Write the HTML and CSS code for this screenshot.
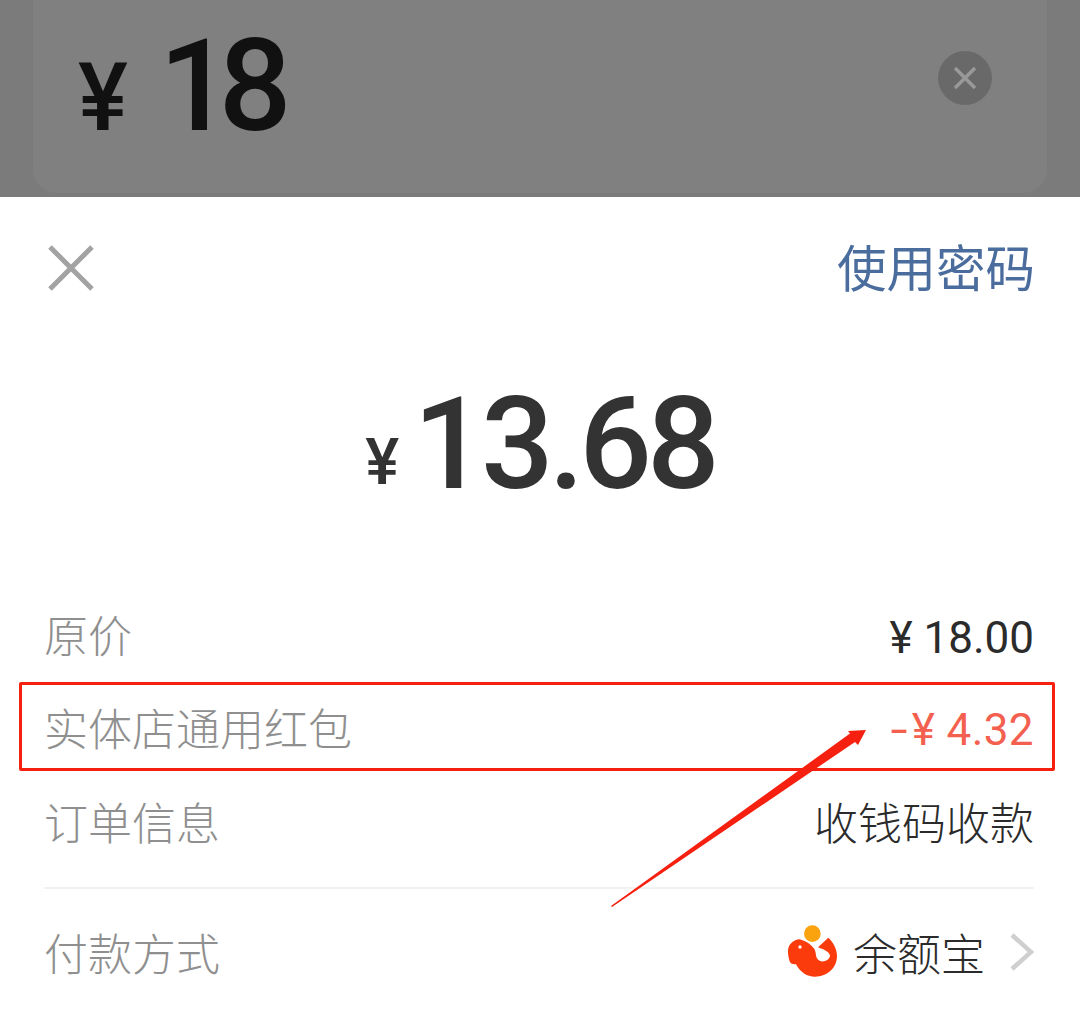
FILE: index.html
```html
<!DOCTYPE html>
<html lang="zh-CN">
<head>
  <meta charset="UTF-8">
  <title>付款详情</title>
  <link rel="stylesheet" href="styles.css">
</head>
<body>

<div class="screen">
  <div class="backdrop">
    <div class="amount-card">
      <div class="amount-input"><span class="amount-yen">¥</span><span class="amount-num">18</span></div>
      <span class="clear-btn">
        <svg width="54" height="54" viewBox="0 0 54 54"><circle cx="27" cy="27" r="27" fill="#696969"/><path d="M17 17L37 37M37 17L17 37" stroke="#999" stroke-width="3.5" fill="none"/></svg>
      </span>
    </div>
  </div>

  <div class="sheet">
    <div class="sheet-head">
      <svg class="close-icon" width="46" height="46" viewBox="0 0 46 46"><path d="M2 2L44 44M44 2L2 44" stroke="#a3a3a3" stroke-width="5" fill="none"/></svg>
      <a class="use-password">使用密码</a>
    </div>

    <div class="total"><span class="total-yen">¥</span><span class="total-num">13.68</span></div>

    <div class="rows">
      <div class="row row-price">
        <span class="row-label">原价</span>
        <span class="row-value num">¥ 18.00</span>
      </div>
      <div class="row row-coupon">
        <span class="row-label">实体店通用红包</span>
        <span class="row-value num discount"><span class="minus">-</span>¥ 4.32</span>
      </div>
      <div class="row row-order">
        <span class="row-label">订单信息</span>
        <span class="row-value">收钱码收款</span>
      </div>
      <div class="row row-method">
        <span class="row-label">付款方式</span>
        <span class="row-value method">
          <svg class="yeb-logo" width="52" height="54" viewBox="18 12 156 162">
            <circle cx="97" cy="38" r="25" fill="#fba30f"/>
            <path d="M55 55C35 60 22 75 24 95C25 108 27 115 30 124C34 130 42 130 48 130C62 155 80 167 105 167C142 167 171 140 171 105C171 82 158 62 145 50L114 79C128 84 150 92 150 106C146 120 125 128 113 115C105 105 110 90 100 80C88 66 72 57 55 55Z" fill="#fb3b0b"/>
            <circle cx="60" cy="78" r="5" fill="#fff"/>
          </svg>
          <span>余额宝</span>
          <svg class="chevron" width="24" height="38" viewBox="0 0 24 38"><path d="M2 2L21 19L2 36" stroke="#cfcfcf" stroke-width="4.5" fill="none"/></svg>
        </span>
      </div>
    </div>
  </div>

  <div class="mark-box"></div>
  <svg class="mark-arrow" width="1080" height="1029" viewBox="0 0 1080 1029"><polygon points="611,906 850,733.5 848,731 866,730 858,745 855,742 612,907" fill="#f5200f"/></svg>
</div>

</body>
</html>
```
FILE: styles.css
```css
html, body {
  margin: 0;
  padding: 0;
}
body {
  font-family: "Noto Sans CJK SC", "Noto Sans", sans-serif;
  background: white;
}
.screen {
  position: relative;
  width: 1080px;
  height: 1029px;
  overflow: hidden;
}
.backdrop {
  height: 197px;
  padding: 0 33px;
  box-sizing: border-box;
  background: #7b7b7b;
}
.amount-card {
  height: 193px;
  background: #808080;
  border-radius: 0 0 24px 24px;
  display: flex;
  align-items: center;
  justify-content: space-between;
  padding: 0 55px 38px 45px;
  box-sizing: border-box;
}
.amount-input {
  display: flex;
  align-items: baseline;
  color: #111;
  font-family: Roboto, sans-serif;
  font-weight: 500;
  margin-top: 16px;
}
.amount-yen {
  font-size: 94px;
  margin-right: 31px;
}
.amount-num {
  font-size: 128px;
  line-height: 150px;
  letter-spacing: -13px;
}
.clear-btn {
  display: flex;
}
.sheet {
  background: white;
}
.sheet-head {
  height: 142px;
  padding: 0 45px 0 48px;
  display: flex;
  align-items: center;
  justify-content: space-between;
}
.use-password {
  color: #4a6d9e;
  font-size: 49.5px;
  margin-bottom: 6px;
}
.total {
  height: 210px;
  margin-bottom: 39px;
  display: flex;
  align-items: center;
  justify-content: center;
  color: #333;
  font-family: Roboto, sans-serif;
  font-weight: 500;
}
.total-yen {
  font-size: 64px;
  align-self: flex-end;
  margin-bottom: 49px;
  margin-right: 14px;
}
.total-num {
  font-size: 128px;
  letter-spacing: -5px;
}
.rows {
  padding: 0 46px 0 44px;
}
.row {
  display: flex;
  align-items: center;
  justify-content: space-between;
  height: 92px;
}
.row-label {
  color: #8f8f8f;
  font-size: 44px;
  font-weight: 300;
}
.row-value {
  color: #2b2b2b;
  font-size: 44px;
  font-weight: 300;
}
.num {
  font-family: Roboto, sans-serif;
  font-weight: 400;
  padding-top: 7px;
}
.discount {
  color: #f4604f;
  letter-spacing: 0.4px;
}
.minus {
  display: inline-block;
  transform: scaleX(1.4);
  margin-right: 6px;
}
.row-coupon {
  height: 93px;
}
.row-order {
  padding-top: 2px;
  padding-bottom: 20px;
  border-bottom: 2px solid #f2f2f2;
}
.row-method {
  height: 126px;
}
.method {
  display: flex;
  align-items: center;
}
.yeb-logo {
  margin-right: 15px;
}
.chevron {
  margin-left: 25px;
}
.mark-box {
  position: absolute;
  left: 19px;
  top: 682px;
  width: 1036px;
  height: 89px;
  box-sizing: border-box;
  border: 3px solid #f5200f;
  border-radius: 2px;
}
.mark-arrow {
  position: absolute;
  left: 0;
  top: 0;
}
```
